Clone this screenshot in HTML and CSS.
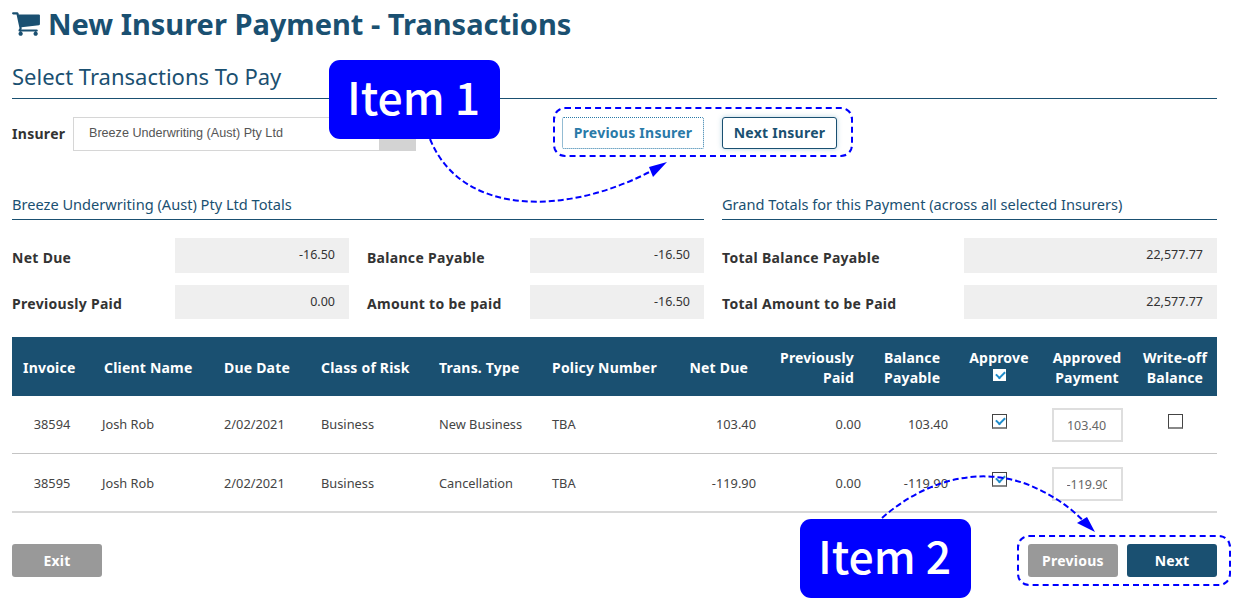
FILE: index.html
```html
<!DOCTYPE html>
<html lang="en">
<head>
<meta charset="utf-8">
<title>New Insurer Payment - Transactions</title>
<link rel="stylesheet" href="styles.css">
</head>
<body>
<main class="page">
  <h1 class="title">
    <svg class="cart" viewBox="0 0 1792 1792" aria-hidden="true"><path d="M704 1536q0 52-38 90t-90 38-90-38-38-90 38-90 90-38 90 38 38 90zm896 0q0 52-38 90t-90 38-90-38-38-90 38-90 90-38 90 38 38 90zm128-1088v512q0 24-16.5 42.5t-40.5 21.5l-1044 122q13 60 13 70 0 16-24 64h920q26 0 45 19t19 45-19 45-45 19h-1024q-26 0-45-19t-19-45q0-11 8-31.5t16-36 21.5-40 15.5-29.5l-177-823h-204q-26 0-45-19t-19-45 19-45 45-19h256q16 0 28.5 6.5t19.5 15.5 13 24.5 8 26 5.5 29.5 4.5 26h1201q26 0 45 19t19 45z"/></svg>
    New Insurer Payment - Transactions
  </h1>
  <h2 class="subtitle">Select Transactions To Pay</h2>

  <div class="insurer-row">
    <label class="label insurer-label">Insurer</label>
    <div class="select"><span class="select-text">Breeze Underwriting (Aust) Pty Ltd</span><span class="select-arrow"></span></div>
    <button class="btn btn-prev-insurer">Previous Insurer</button>
    <button class="btn btn-next-insurer">Next Insurer</button>
  </div>

  <div class="totals">
    <section>
      <h3 class="totals-head">Breeze Underwriting (Aust) Pty Ltd Totals</h3>
      <div class="totals-grid grid-left">
        <span class="label">Net Due</span><output class="amount">-16.50</output>
        <span class="label label-gap">Balance Payable</span><output class="amount">-16.50</output>
        <span class="label">Previously Paid</span><output class="amount">0.00</output>
        <span class="label label-gap">Amount to be paid</span><output class="amount">-16.50</output>
      </div>
    </section>
    <section>
      <h3 class="totals-head">Grand Totals for this Payment (across all selected Insurers)</h3>
      <div class="totals-grid grid-right">
        <span class="label">Total Balance Payable</span><output class="amount">22,577.77</output>
        <span class="label">Total Amount to be Paid</span><output class="amount">22,577.77</output>
      </div>
    </section>
  </div>

  <table class="tx">
    <colgroup>
      <col class="c1"><col class="c2"><col class="c3"><col class="c4"><col class="c5"><col class="c6"><col class="c7"><col class="c8"><col class="c9"><col class="c10"><col class="c11"><col class="c12">
    </colgroup>
    <thead>
      <tr>
        <th class="th-invoice">Invoice</th>
        <th>Client Name</th>
        <th>Due Date</th>
        <th>Class of Risk</th>
        <th>Trans. Type</th>
        <th>Policy Number</th>
        <th class="th-net">Net Due</th>
        <th class="th-prev">Previously<br>Paid</th>
        <th class="th-bal">Balance<br>Payable</th>
        <th class="mid th-approve">Approve<span class="check check-head"></span></th>
        <th class="mid">Approved<br>Payment</th>
        <th class="mid th-write">Write-off<br>Balance</th>
      </tr>
    </thead>
    <tbody>
      <tr>
        <td class="mid-cell">38594</td><td class="client">Josh Rob</td><td>2/02/2021</td><td>Business</td><td>New Business</td><td>TBA</td>
        <td class="num">103.40</td><td class="num">0.00</td><td class="num">103.40</td>
        <td class="mid-cell"><span class="check on"></span></td>
        <td class="mid-cell"><input class="pay" value="103.40"></td>
        <td class="mid-cell write"><span class="check"></span></td>
      </tr>
      <tr>
        <td class="mid-cell">38595</td><td class="client">Josh Rob</td><td>2/02/2021</td><td>Business</td><td>Cancellation</td><td>TBA</td>
        <td class="num">-119.90</td><td class="num">0.00</td><td class="num">-119.90</td>
        <td class="mid-cell"><span class="check on"></span></td>
        <td class="mid-cell"><input class="pay" value="-119.90"></td>
        <td class="mid-cell write"></td>
      </tr>
    </tbody>
  </table>

  <div class="actions">
    <button class="btn btn-grey">Exit</button>
    <div class="actions-right">
      <button class="btn btn-grey">Previous</button>
      <button class="btn btn-navy">Next</button>
    </div>
  </div>
</main>

<div class="callout callout-1">Item 1</div>
<div class="callout callout-2">Item 2</div>
<div class="dash dash-1"></div>
<div class="dash dash-2"></div>
<svg class="arrows" viewBox="0 0 1246 609" aria-hidden="true">
  <path class="arrow-line" d="M430 139C462 218 570 216 657 168"/>
  <path class="arrow-head" d="M667 162L649 167L653 177Z"/>
  <path class="arrow-line" d="M882 518C925 480 985 462 1040 490C1060 500 1075 511 1088 526"/>
  <path class="arrow-head" d="M1095 532L1077 523L1087 517Z"/>
</svg>
</body>
</html>
```
FILE: styles.css
```css
* { box-sizing: border-box; }
html, body { margin: 0; padding: 0; }
body {
  position: relative;
  width: 1246px;
  height: 609px;
  overflow: hidden;
  background: #fff;
  font-family: "Noto Sans", sans-serif;
  color: #333;
}
.page { padding: 0 29px 0 12px; }

.title {
  display: flex;
  align-items: center;
  gap: 7px;
  margin: 0;
  height: 48px;
  padding-bottom: 2px;
  font-size: 29px;
  font-weight: 700;
  color: #1a5071;
}
.cart { width: 30px; height: 30px; margin-left: -1px; fill: #1a5071; flex: none; }

.subtitle {
  margin: 0;
  height: 51px;
  padding-top: 12px;
  border-bottom: 1px solid #1a5071;
  font-size: 22px;
  font-weight: 400;
  line-height: 32px;
  color: #1a5071;
}

.insurer-row {
  display: flex;
  align-items: flex-start;
  height: 88px;
  padding-top: 18px;
}
.label { font-size: 14px; font-weight: 700; letter-spacing: 0.3px; color: #333; padding-top: 3px; }
.insurer-label { width: 61px; padding-top: 5px; line-height: 24px; }
.select {
  display: flex;
  width: 343px;
  height: 34px;
  border: 1px solid #d6d6d6;
  margin-right: 146px;
}
.select-text {
  flex: 1;
  padding-left: 15px;
  font-family: "Liberation Sans", sans-serif;
  font-size: 12.6px;
  line-height: 31px;
  color: #555;
}
.select-arrow { width: 37px; background: #d3d3d3; margin: -1px -1px -1px 0; }

.btn {
  font-family: "Noto Sans", sans-serif;
  font-size: 14px;
  font-weight: 700;
  letter-spacing: 0.25px;
  line-height: 18px;
  border-radius: 3px;
  padding: 0;
  cursor: pointer;
}
.btn-prev-insurer {
  width: 142px;
  height: 32px;
  margin-right: 18px;
  background: #fff;
  border: 1px dotted #2a7aa8;
  border-radius: 2px;
  color: #2a7aa8;
}
.btn-next-insurer {
  width: 115px;
  height: 32px;
  background: #fff;
  border: 1px solid #1a5071;
  color: #1a5071;
  box-shadow: 0 0 5px rgba(42, 122, 168, 0.35);
}

.totals {
  display: grid;
  grid-template-columns: 692px 495px;
  column-gap: 18px;
}
.totals-head {
  margin: 0;
  height: 33px;
  padding-top: 7px;
  border-bottom: 1px solid #1a5071;
  font-size: 14.6px;
  font-weight: 400;
  line-height: 20px;
  color: #1a5071;
}
.totals-grid {
  display: grid;
  grid-template-rows: 35px 34px;
  row-gap: 12px;
  margin-top: 18px;
  align-items: center;
}
.grid-left { grid-template-columns: 163px 174px 181px 174px; }
.grid-right { grid-template-columns: 242px 253px; }
.label-gap { padding-left: 18px; }
.amount {
  display: block;
  align-self: stretch;
  padding: 9px 14px 0 0;
  background: #efefef;
  font-size: 12.5px;
  line-height: 16px;
  text-align: right;
  color: #333;
}

.tx {
  width: 1205px;
  margin-top: 18px;
  border-collapse: collapse;
  table-layout: fixed;
  font-size: 12.8px;
}
.c1 { width: 80px; } .c2 { width: 120px; } .c3 { width: 97px; } .c4 { width: 118px; }
.c5 { width: 113px; } .c6 { width: 120px; } .c7 { width: 108px; } .c8 { width: 105px; }
.c9 { width: 87px; } .c10 { width: 78px; } .c11 { width: 98px; } .c12 { width: 81px; }

.tx thead tr { height: 59px; background: #1a5071; }
.tx th {
  padding: 2px 0 0 12px;
  font-size: 14px;
  font-weight: 700;
  letter-spacing: 0.2px;
  line-height: 20px;
  text-align: left;
  color: #fff;
}
.tx .th-invoice { padding-left: 11px; }
.tx .th-net { padding: 2px 20px 0 0; text-align: right; }
.tx .th-prev { padding: 2px 19px 0 0; text-align: right; }
.tx .th-bal { padding: 2px 0 0 11px; }
.tx .mid { padding: 2px 0 0; text-align: center; }
.tx .th-approve { padding: 0; }
.tx .th-write { padding-right: 3px; }

.tx td {
  height: 57px;
  padding: 0 0 0 12px;
  border-bottom: 1px solid #c4c4c4;
  color: #444;
}
.tx tr + tr td { height: 59px; padding-top: 2px; border-bottom: 2px solid #d8d8d8; }
.tx .client { padding-left: 10px; }
.tx .num { padding-right: 12px; padding-left: 0; text-align: right; }
.tx .mid-cell { padding-left: 0; text-align: center; }
.tx .write { padding-right: 3px; }

.check {
  display: inline-block;
  position: relative;
  width: 15px;
  height: 15px;
  margin-bottom: 6px;
  vertical-align: middle;
  background: #fff;
  border: 1px solid #444;
  border-bottom-width: 2px;
  border-bottom-color: #888;
}
.check.on::after, .check-head::after {
  content: "";
  position: absolute;
  left: 3px;
  top: 2px;
  width: 7px;
  height: 4px;
  border-left: 2px solid #1f8ccb;
  border-bottom: 2px solid #1f8ccb;
  transform: rotate(-45deg);
}
.check-head { display: block; margin: 0 auto 2px; border-color: #1a5071; }
tr + tr .check { margin-bottom: 8px; }

.pay {
  width: 71px;
  height: 34px;
  margin-top: 2px;
  padding: 0 14px 0 13px;
  border: 2px solid #dedede;
  background: #fff;
  font-family: "Noto Sans", sans-serif;
  font-size: 12.5px;
  text-align: center;
  color: #666;
  vertical-align: middle;
}

.actions {
  display: flex;
  justify-content: space-between;
  margin-top: 31px;
}
.actions-right { display: flex; gap: 9px; }
.btn-grey, .btn-navy {
  width: 90px;
  height: 33px;
  border: 0;
  color: #fff;
}
.btn-grey { background: #999; }
.btn-navy { background: #1a5071; }

.callout {
  position: absolute;
  width: 171px;
  height: 79px;
  padding-right: 2px;
  border-radius: 11px;
  background: #00f;
  color: #fff;
  font-family: "Noto Sans CJK JP", "Noto Sans", sans-serif;
  font-size: 44.5px;
  font-weight: 500;
  line-height: 71px;
  text-align: center;
}
.callout-1 { left: 329px; top: 60px; }
.callout-2 { left: 800px; top: 519px; }

.dash {
  position: absolute;
  border: 2px dashed #00f;
  border-radius: 12px;
}
.dash-1 { left: 553px; top: 107px; width: 300px; height: 50px; }
.dash-2 { left: 1017px; top: 535px; width: 214px; height: 51px; }

.arrows {
  position: absolute;
  left: 0;
  top: 0;
  width: 1246px;
  height: 609px;
  pointer-events: none;
}
.arrow-line { fill: none; stroke: #00f; stroke-width: 2; stroke-dasharray: 6 3; }
.arrow-head { fill: #00f; }
```
